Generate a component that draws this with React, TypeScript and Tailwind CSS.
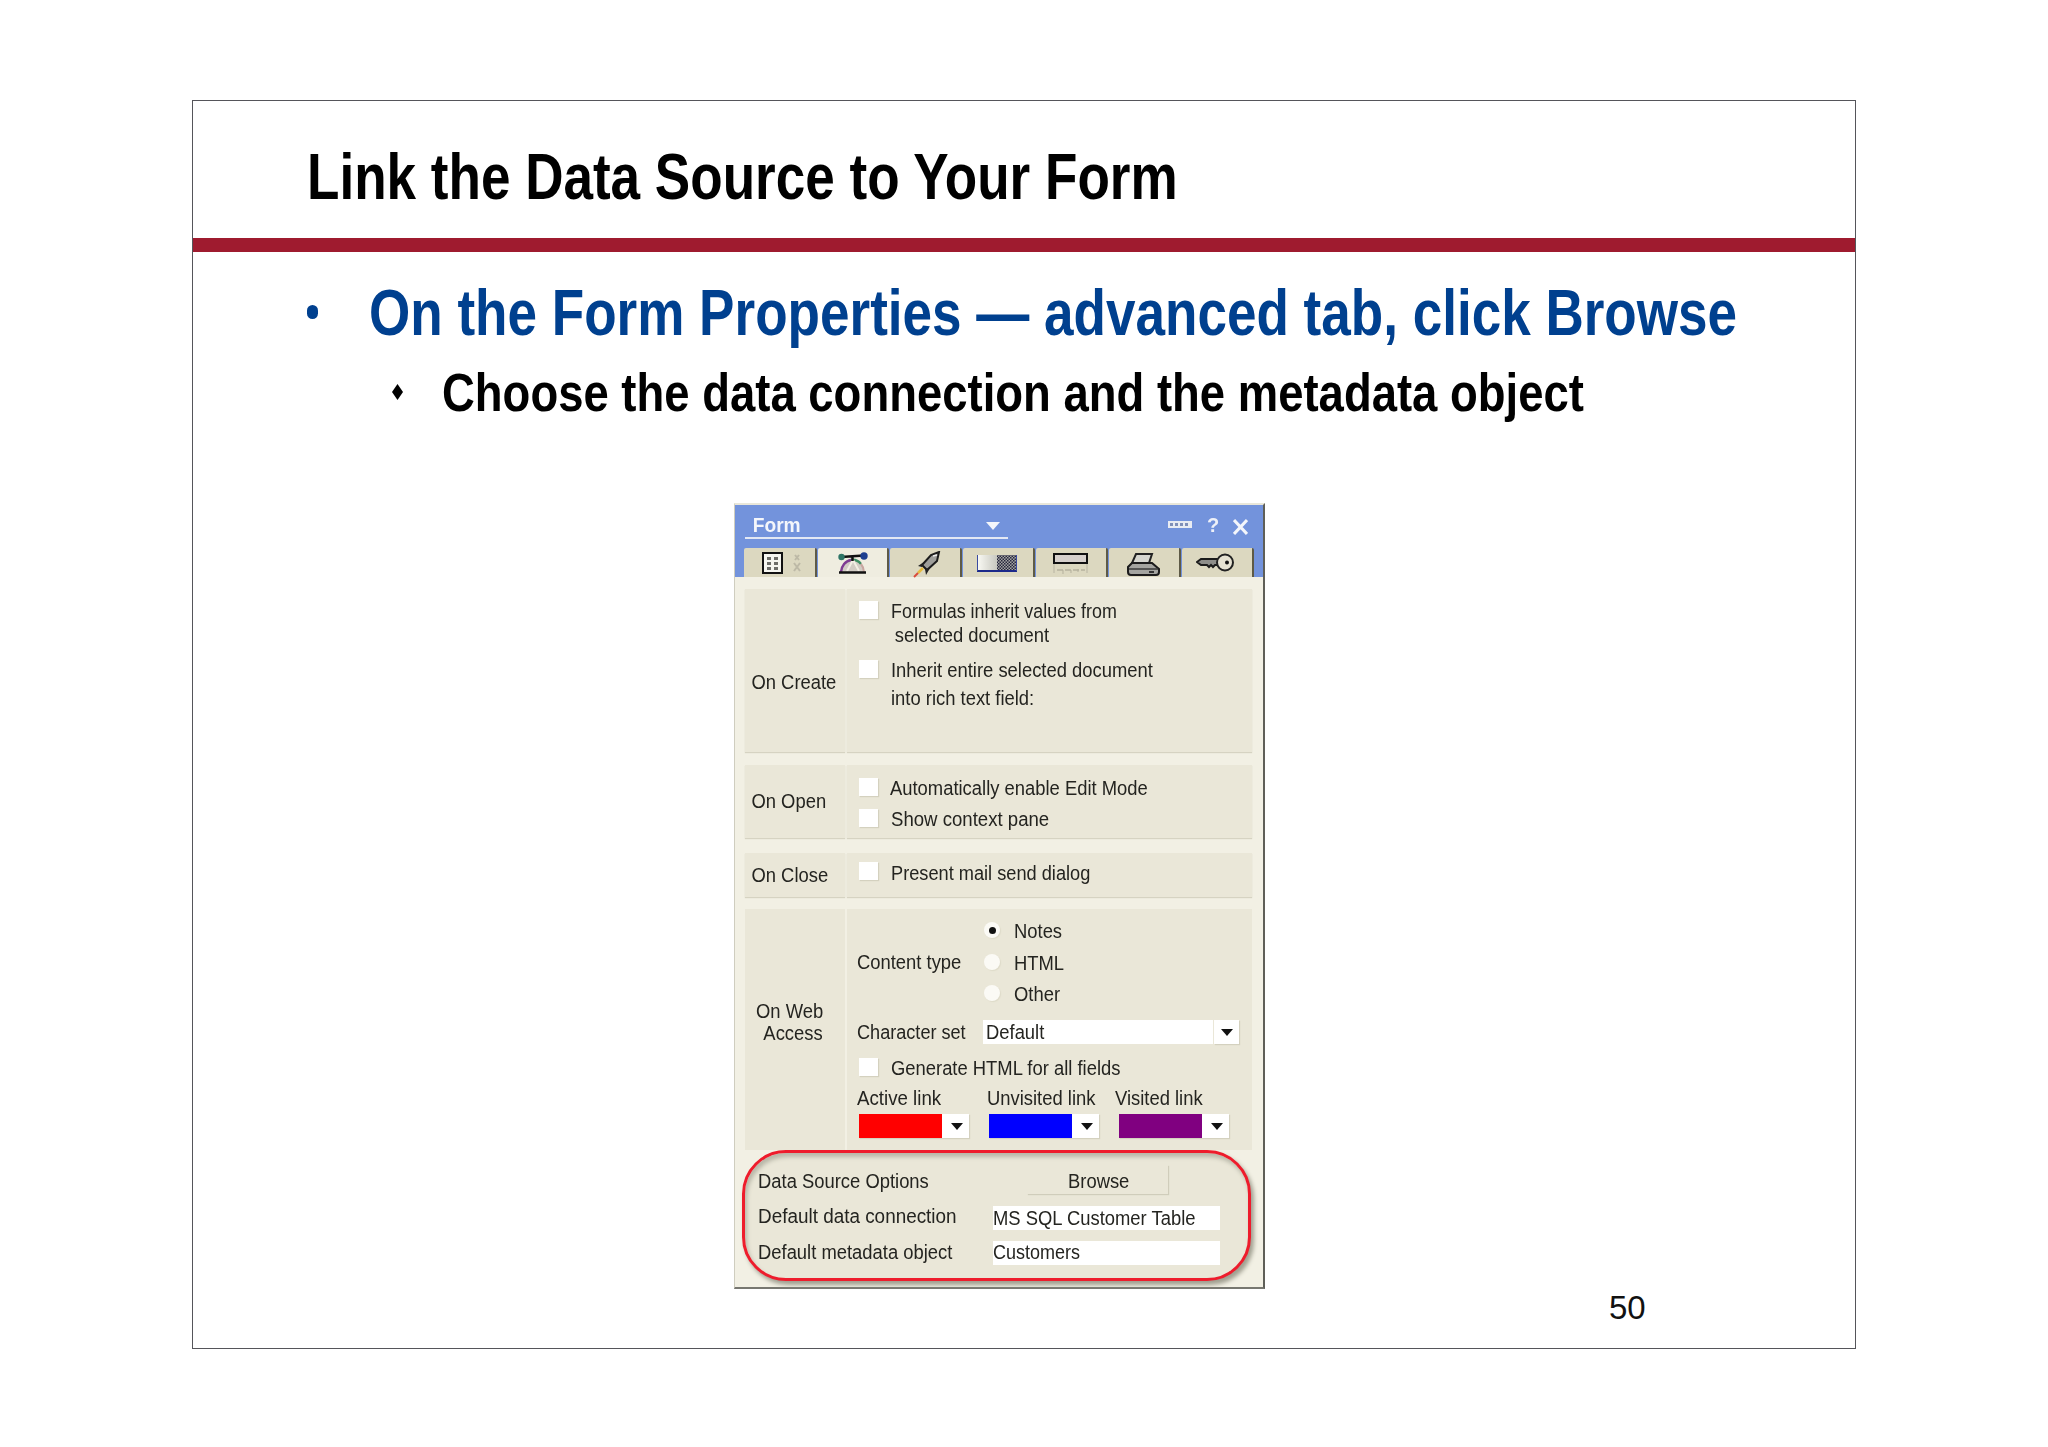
import React from "react";

const T = ({ children, className = "", sx = "scale-x-[.92]" }: { children: React.ReactNode; className?: string; sx?: string }) => (
  <div className={"origin-left whitespace-nowrap text-[20px] leading-6 text-[#242420] " + sx + " " + className}>{children}</div>
);

const Check = () => <div className="w-[19px] h-[18px] shrink-0 bg-white shadow-[1px_1px_1px_#d4d1bf]" />;

const Radio = ({ on = false }: { on?: boolean }) => (
  <div className="w-4 h-4 mt-[3px] shrink-0 rounded-full bg-[#fbfaf5] flex items-center justify-center shadow-[1px_1px_1px_#dedbc9]">
    {on && <div className="w-[7px] h-[7px] rounded-full bg-[#111]" />}
  </div>
);

const Arrow = ({ className = "" }: { className?: string }) => (
  <svg width="12" height="7" viewBox="0 0 12 7" className={className}>
    <path d="M0 0H12L6 7Z" fill="#111" />
  </svg>
);

const Swatch = ({ color }: { color: string }) => (
  <div className="w-[110px] h-6 flex bg-white shadow-[1px_1px_1px_#d4d1bf]">
    <div className={"w-[83px] h-6 " + color} />
    <div className="flex-1 flex items-center justify-center pl-[3px]">
      <Arrow />
    </div>
  </div>
);

const Tab = ({ children, className = "" }: { children: React.ReactNode; className?: string }) => (
  <div className={"h-[29px] flex items-start border-r-2 border-r-[#5e5a46] rounded-t-[2px] " + className}>{children}</div>
);

const GridIcon = () => (
  <svg width="50" height="24" viewBox="0 0 50 24" className="mt-1">
    <rect x="1" y="1" width="19" height="20" fill="#f6f6f0" stroke="#111" strokeWidth="2" />
    <g fill="#6d6d68">
      <rect x="5" y="5" width="4" height="3" /><rect x="12" y="5" width="4" height="3" />
      <rect x="5" y="10" width="4" height="3" /><rect x="12" y="10" width="4" height="3" />
      <rect x="5" y="15" width="4" height="3" /><rect x="12" y="15" width="4" height="3" />
    </g>
    <path d="M33 3 L37 8 M37 3 L33 8 M32 11 L38 19 M38 11 L32 19" stroke="#bdb9a6" strokeWidth="2" fill="none" />
  </svg>
);

const HatIcon = () => (
  <svg width="30" height="23" viewBox="0 0 30 23" className="mt-1">
    <path d="M3 20 A11.500 13 0 0 1 26 20 Z" fill="#d2ccc4" />
    <path d="M3 20 A11.500 13 0 0 1 13 8" fill="none" stroke="#7f3c92" strokeWidth="2.500" />
    <path d="M13 8 A11.500 13 0 0 1 23 12" fill="none" stroke="#3f8f64" strokeWidth="2.500" />
    <path d="M23 12 A11.500 13 0 0 1 26 20" fill="none" stroke="#c8a6a0" strokeWidth="2" />
    <path d="M15 8 L9 19 M15 8 L21 19" stroke="#f2efe4" strokeWidth="2" />
    <path d="M1 20.500 H28" stroke="#111" strokeWidth="2.500" />
    <path d="M3 5 L26 3.500 M14.500 4 V9" stroke="#111" strokeWidth="2.500" />
    <circle cx="3.500" cy="5" r="3.200" fill="#2e7566" />
    <circle cx="26" cy="4" r="3.700" fill="#1e3f8f" />
  </svg>
);

const RocketIcon = () => (
  <svg width="28" height="27" viewBox="0 0 28 27" className="mt-[3px]">
    <path d="M26 1 L24 10 L14 19 L9 14 L18 4 Z" fill="#9e9e9a" stroke="#1c1c1c" strokeWidth="2" />
    <path d="M20 5 L24 4" stroke="#ececec" strokeWidth="1.500" />
    <path d="M11 11 L5 15 L9 16 Z M17 17 L13 24 L12 18 Z" fill="#222" />
    <path d="M10 17 L5 22" stroke="#e6bb3e" strokeWidth="2.500" />
    <path d="M5 22 L1 26" stroke="#d94a3a" strokeWidth="2" />
  </svg>
);

const GradientIcon = () => (
  <svg width="40" height="18" viewBox="0 0 40 18" className="mt-[6px]">
    <defs>
      <linearGradient id="grd" x1="0" y1="0" x2="1" y2="0">
        <stop offset="0" stopColor="#f8f8f2" />
        <stop offset="0.5" stopColor="#c8c8c0" />
        <stop offset="1" stopColor="#8a8a88" />
      </linearGradient>
      <pattern id="dith" width="3" height="3" patternUnits="userSpaceOnUse">
        <rect width="3" height="3" fill="#a4a4a0" />
        <rect width="1.500" height="1.500" fill="#26263f" />
        <rect x="1.500" y="1.500" width="1.500" height="1.500" fill="#26263f" />
      </pattern>
    </defs>
    <rect x="1" y="1" width="38" height="15" fill="url(#grd)" />
    <rect x="20" y="1" width="19" height="15" fill="url(#dith)" />
    <path d="M0 17 H40" stroke="#1c2a8a" strokeWidth="2" />
    <path d="M39.500 1 V17 M0.500 1 V17" stroke="#3a4aa0" strokeWidth="1" />
  </svg>
);

const BarIcon = () => (
  <svg width="35" height="22" viewBox="0 0 35 22" className="mt-[5px]">
    <rect x="1" y="1" width="33" height="9" fill="#d6d0cc" stroke="#111" strokeWidth="2" />
    <path d="M1 11 V20 M34 11 V20" stroke="#c4c0ac" strokeWidth="1.500" />
    <path d="M4 17 H32" stroke="#b5b19d" strokeWidth="1.500" strokeDasharray="6 2" />
    <path d="M10 17 V21 M18 17 V20 M25 16 V19" stroke="#b5b19d" strokeWidth="1" />
  </svg>
);

const PrinterIcon = () => (
  <svg width="33" height="23" viewBox="0 0 33 23" className="mt-[5px]">
    <path d="M9 1 H25 L22 10 H5 Z" fill="#d6d6d0" stroke="#222" strokeWidth="2" />
    <path d="M5 10 H25 L32 16 V19 Q32 22 29 22 H4 Q1 22 1 19 V14 Z" fill="#a4a4a0" stroke="#1c1c1c" strokeWidth="2" />
    <path d="M2 16 H31" stroke="#3a3a3a" strokeWidth="1.500" />
    <rect x="22" y="18" width="5" height="2" fill="#333" />
  </svg>
);

const KeyIcon = () => (
  <svg width="39" height="19" viewBox="0 0 39 19" className="mt-[5px]">
    <path d="M1 9 L5 6 H23 V12 H19 L17 14 L15 12 L13 14 L11 12 H5 Z" fill="#8e8e8a" stroke="#1c1c1c" strokeWidth="2" />
    <circle cx="29" cy="9.500" r="8" fill="#e6e2d2" stroke="#222" strokeWidth="2" />
    <circle cx="31" cy="9.500" r="2" fill="#111" />
  </svg>
);

const Group = ({
  label,
  labelClass,
  panelClass,
  children,
}: {
  label: React.ReactNode;
  labelClass: string;
  panelClass: string;
  children: React.ReactNode;
}) => (
  <div className={"flex gap-[2px] " + panelClass}>
    <div className={"w-[100px] bg-[#eae7d8] shadow-[0_1px_1px_#d6d3c2] " + labelClass}>{label}</div>
    <div className="w-[405px] bg-[#eae7d8] shadow-[0_1px_1px_#d6d3c2] pl-[12px]">{children}</div>
  </div>
);

const Dialog = () => (
  <div className="w-[531px] h-[786px] ml-[541px] mt-[81px] bg-[#f2f0e4] border-t-2 border-t-[#e9e7da] border-l border-l-[#cfcdbf] border-r-2 border-r-[#5f5f58] border-b-2 border-b-[#777770] blur-[0.4px] font-['Liberation_Sans',Arial,sans-serif]">
    {/* title bar */}
    <div className="bg-[#7393dc] h-[72px]">
      <div className="h-[43px] pl-[10px] pt-2 flex items-start">
        <div className="w-[263px] h-[26px] border-b-2 border-b-[#e3e8f4] flex justify-between">
          <div className="origin-left scale-x-[.96] text-[20px] leading-6 font-bold text-[#f4f6fb] pl-[8px]">Form</div>
          <svg width="14" height="8" viewBox="0 0 14 8" className="mt-[9px] mr-2">
            <path d="M0 0H14L7 8Z" fill="#f4f6fb" />
          </svg>
        </div>
        <svg width="24" height="7" viewBox="0 0 24 7" className="ml-[160px] mt-2">
          <rect width="24" height="7" fill="#e8ebf2" />
          <g fill="#7f8fb8">
            <rect x="2" y="2" width="3" height="3" /><rect x="7" y="2" width="3" height="3" /><rect x="12" y="2" width="3" height="3" /><rect x="17" y="2" width="3" height="3" />
          </g>
        </svg>
        <div className="ml-[15px] text-[20px] leading-6 font-bold text-[#eef1f8]">?</div>
        <svg width="15" height="16" viewBox="0 0 15 16" className="ml-[14px] mt-[6px]">
          <path d="M1 1 L14 15 M14 1 L1 15" stroke="#f4f6fb" strokeWidth="3" />
        </svg>
      </div>
      <div className="flex pl-[9px] gap-px">
        <Tab className="w-[73px] pl-[18px] bg-[#dcd8c0]"><GridIcon /></Tab>
        <Tab className="w-[71px] pl-[20px] bg-[#efede0]"><HatIcon /></Tab>
        <Tab className="w-[72px] pl-[23px] bg-[#dcd8c0]"><RocketIcon /></Tab>
        <Tab className="w-[72px] pl-[14px] bg-[#dcd8c0]"><GradientIcon /></Tab>
        <Tab className="w-[72px] pl-[17px] bg-[#dcd8c0]"><BarIcon /></Tab>
        <Tab className="w-[72px] pl-[18px] bg-[#dcd8c0]"><PrinterIcon /></Tab>
        <Tab className="w-[72px] pl-[14px] bg-[#dcd8c0]"><KeyIcon /></Tab>
      </div>
    </div>

    {/* body */}
    <div className="pl-[10px] pt-[12px]">
      <Group label={<T className="pl-[7px]">On Create</T>} labelClass="pt-[81px]" panelClass="h-[163px]">
        <div className="pt-[12px]">
          <div className="flex h-[59px]">
            <Check />
            <div className="ml-[13px] -mt-[2px]">
              <T className="leading-[24px]" sx="scale-x-[.895]">Formulas inherit values from</T>
              <T className="leading-[24px] pl-1">selected document</T>
            </div>
          </div>
          <div className="flex">
            <Check />
            <div className="ml-[13px] -mt-[4px]">
              <T className="leading-[28px]">Inherit entire selected document</T>
              <T className="leading-[28px]">into rich text field:</T>
            </div>
          </div>
        </div>
      </Group>

      <Group label={<T className="pl-[7px]">On Open</T>} labelClass="pt-6" panelClass="h-[73px] mt-[13px]">
        <div className="pt-[13px]">
          <div className="flex h-[31px]">
            <Check />
            <T className="ml-[12px] -mt-[2px]">Automatically enable Edit Mode</T>
          </div>
          <div className="flex">
            <Check />
            <T className="ml-[13px] -mt-[2px]" sx="scale-x-[.93]">Show context pane</T>
          </div>
        </div>
      </Group>

      <Group label={<T className="pl-[7px]">On Close</T>} labelClass="pt-[10px]" panelClass="h-[44px] mt-[15px]">
        <div className="pt-[9px] flex">
          <Check />
          <T className="ml-[13px] -mt-[1px]" sx="scale-x-[.91]">Present mail send dialog</T>
        </div>
      </Group>

      <div className="flex gap-[2px] h-[241px] mt-[12px]">
        <div className="w-[100px] bg-[#eae7d8] pt-[91px] pl-[11px]">
          <T className="leading-[22px]">On Web</T>
          <T className="leading-[22px] pl-[8px]">Access</T>
        </div>
        <div className="w-[405px] bg-[#eae7d8] pl-[10px]">
          <div className="flex pt-[10px]">
            <T className="w-[127px] pt-[31px] h-[55px]">Content type</T>
            <div>
              <div className="flex h-[31.5px]"><Radio on /><T className="ml-[14px]">Notes</T></div>
              <div className="flex h-[31.5px]"><Radio /><T className="ml-[14px]">HTML</T></div>
              <div className="flex h-[31.5px]"><Radio /><T className="ml-[14px]">Other</T></div>
            </div>
          </div>
          <div className="flex mt-[6.5px] h-6">
            <T className="w-[126px]" sx="scale-x-[.905]">Character set</T>
            <div className="w-[230px] h-6 bg-white pl-[3px]"><T>Default</T></div>
            <div className="w-[25px] h-6 bg-white ml-px flex items-center justify-center shadow-[1px_1px_1px_#d4d1bf]"><Arrow /></div>
          </div>
          <div className="flex mt-[14px] ml-[2px] h-[28px]">
            <Check />
            <T className="ml-[13px] -mt-[2px]">Generate HTML for all fields</T>
          </div>
          <div className="grid grid-cols-[130px_128px_1fr] h-[28px]">
            <T sx="scale-x-[.935]">Active link</T>
            <T>Unvisited link</T>
            <T>Visited link</T>
          </div>
          <div className="flex gap-[20px] pl-[2px]">
            <Swatch color="bg-[#ff0000]" />
            <Swatch color="bg-[#0000ff]" />
            <Swatch color="bg-[#800080]" />
          </div>
        </div>
      </div>

      {/* highlighted data source section */}
      <div className="w-[509px] h-[131px] -ml-[3px] border-[3px] border-[#ee1c2c] rounded-[44px] bg-[#eae7d8] shadow-[3px_4px_4px_#a09f90,inset_2px_4px_4px_#b8b7a8] pl-[12.500px] pt-[12px]">
        <div className="flex h-[29px]">
          <T className="w-[269.500px] pt-1">Data Source Options</T>
          <div className="w-[141px] h-[29px] shadow-[1px_1px_1px_#d0cdbb] flex justify-center pt-1 pl-2">
            <T>Browse</T>
          </div>
        </div>
        <div className="flex mt-[12px] h-6">
          <T className="w-[235.500px] -mt-[2px]" sx="scale-x-[.945]">Default data connection</T>
          <div className="w-[227px] h-6 bg-white"><T>MS SQL Customer Table</T></div>
        </div>
        <div className="flex mt-[11px] h-6">
          <T className="w-[235.500px] -mt-px">Default metadata object</T>
          <div className="w-[227px] h-6 bg-white"><T className="-mt-px" sx="scale-x-[.9]">Customers</T></div>
        </div>
      </div>
    </div>
  </div>
);

export default function App() {
  return (
    <div className="w-[2048px] h-[1447px] bg-white pl-[192px] pt-[100px] font-['Liberation_Sans',Arial,sans-serif]">
      <div className="w-[1664px] h-[1249px] border border-[#55555a] overflow-hidden">
        <div className="h-[137px] pt-[40px] pl-[114px]">
          <div className="origin-left scale-x-[.829] whitespace-nowrap text-[64px] leading-[72px] font-bold text-black">
            Link the Data Source to Your Form
          </div>
        </div>
        <div className="h-[14px] bg-[#9f1b2f]" />
        <div className="flex mt-[25px] pl-[114px] h-[72px]">
          <div className="w-[11px] h-[14px] mt-[28px] shrink-0 rounded-full bg-[#00408f]" />
          <div className="ml-[51px] origin-left scale-x-[.829] whitespace-nowrap text-[64px] leading-[72px] font-bold text-[#00408f]">
            On the Form Properties — advanced tab, click Browse
          </div>
        </div>
        <div className="flex mt-[13px] pl-[199px] h-[60px]">
          <svg width="11" height="16" viewBox="0 0 11 16" className="mt-[22px] shrink-0">
            <path d="M5.500 0 L11 8 L5.500 16 L0 8 Z" fill="#000" />
          </svg>
          <div className="ml-[39px] origin-left scale-x-[.842] whitespace-nowrap text-[54px] leading-[60px] font-bold text-black">
            Choose the data connection and the metadata object
          </div>
        </div>
        <Dialog />
        <div className="pl-[1416px] -mt-px text-[33px] leading-10 text-[#111]">50</div>
      </div>
    </div>
  );
}
